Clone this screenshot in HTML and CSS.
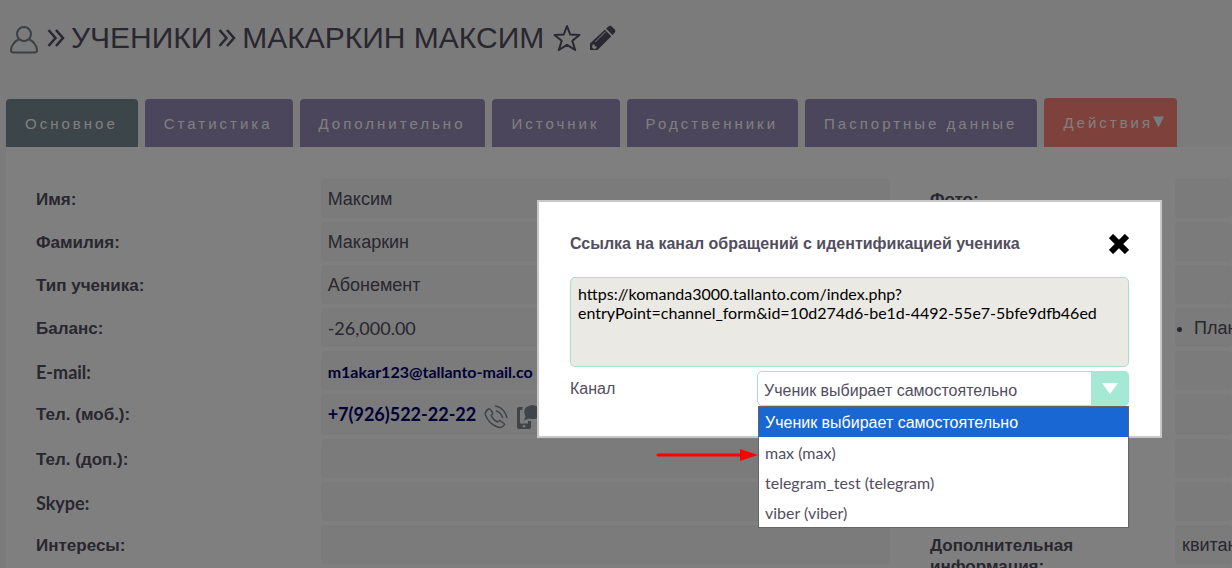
FILE: index.html
```html
<!DOCTYPE html>
<html lang="ru">
<head>
  <meta charset="UTF-8">
  <meta name="viewport" content="width=device-width, initial-scale=1.0">
  <title>Макаркин Максим</title>
  <link rel="stylesheet" href="styles.css">
</head>
<body>

  <div class="page">
    <header class="module-title">
      <svg class="icon-user" viewBox="0 0 28 28" fill="none" stroke="currentColor" stroke-width="2">
        <circle cx="14" cy="8" r="7"/>
        <path d="M8.500 13.500C4.500 15.500 1 20 1 24Q1 26.500 3.500 26.500H24.500Q27 26.500 27 24C27 20 23.500 15.500 19.500 13.500"/>
      </svg>
      <h1>
        <svg class="chevrons" viewBox="0 0 18 18" fill="none" stroke="currentColor" stroke-width="2.500"><path d="M1.500 1L8.500 9L1.500 17M9 1L16 9L9 17"/></svg>
        <span>УЧЕНИКИ</span>
        <svg class="chevrons" viewBox="0 0 18 18" fill="none" stroke="currentColor" stroke-width="2.500"><path d="M1.500 1L8.500 9L1.500 17M9 1L16 9L9 17"/></svg>
        <span>МАКАРКИН МАКСИМ</span>
      </h1>
      <button class="icon-btn" aria-label="В избранное">
        <svg class="icon-star" viewBox="0 0 28 28" fill="none" stroke="currentColor" stroke-width="2" stroke-linejoin="round">
          <path d="M14 2L17.200 10.500L26.500 11L19.300 16.700L22.200 26L14 20.800L5.800 26L8.700 16.700L1.500 11L10.800 10.500Z"/>
        </svg>
      </button>
      <button class="icon-btn" aria-label="Редактировать">
        <svg class="icon-pencil" viewBox="0 0 26 26" fill="currentColor">
          <path d="M18.200 1.700Q20 0 21.800 1.500L24.500 4.200Q26.300 6 24.600 7.800L22.500 9.900L16 3.600Z"/>
          <path fill-rule="evenodd" d="M14.800 4.800L21.300 11.200L7.500 25H0V18.500ZM2.800 19.500L2 22.200L3.700 24L6.500 23.200L6.500 21.300H4.700V19.500ZM5.500 17.200L15.800 7.100L15.200 6.500L5 16.700Z"/>
        </svg>
      </button>
    </header>

    <nav class="tabs">
      <a href="#main" class="tab active">Основное</a>
      <a href="#stat" class="tab">Статистика</a>
      <a href="#extra" class="tab">Дополнительно</a>
      <a href="#source" class="tab">Источник</a>
      <a href="#relatives" class="tab">Родственники</a>
      <a href="#passport" class="tab">Паспортные данные</a>
      <button class="tab actions">Действия<svg viewBox="0 0 12 12" fill="currentColor"><path d="M0 0H12L6 12Z"/></svg></button>
    </nav>

    <main class="panel">
      <dl class="fields fields-left">
        <dt>Имя:</dt><dd>Максим</dd>
        <dt>Фамилия:</dt><dd>Макаркин</dd>
        <dt>Тип ученика:</dt><dd>Абонемент</dd>
        <dt>Баланс:</dt><dd class="latin">-26,000.00</dd>
        <dt class="latin">E-mail:</dt><dd class="latin"><a class="email" href="mailto:m1akar123@tallanto-mail.co">m1akar123@tallanto-mail.co</a></dd>
        <dt>Тел. (моб.):</dt>
        <dd class="phone latin">
          <a href="tel:+79265222222">+7(926)522-22-22</a>
          <svg viewBox="0 0 24 24" fill="none" stroke="currentColor" stroke-width="1.500" stroke-linecap="round">
            <path d="M4.500 4Q5.500 3.300 6.300 4.400L8.500 7.500Q9 8.500 8 9.500L7.200 10.300Q8.500 14.500 13.500 17L14.700 16Q15.700 15.200 16.700 16L20 18.500Q21 19.300 20 20.300Q17.500 23.500 13.500 22Q4.500 18.500 1.500 10Q.5 6.500 4.500 4Z"/>
            <path d="M12.500 6Q17 7.500 18.500 12.500M11.500 1Q20.500 3 23 13" stroke-dasharray="5 1"/>
          </svg>
          <svg viewBox="0 0 24 24" fill="currentColor">
            <path d="M7 2H3Q1 2 1 4V22Q1 24 3 24H13Q15 24 15 22V16H12V18.500H4V5H6Z"/>
            <circle class="phone-dot" cx="8" cy="21.200" r="1.300"/>
            <path d="M16 0Q25 1 25 7Q25 14 16 14Q14 14 13 13.500L8 15.500L9.500 11.500Q5 2 16 0Z"/>
          </svg>
        </dd>
        <dt>Тел. (доп.):</dt><dd></dd>
        <dt class="latin">Skype:</dt><dd></dd>
        <dt>Интересы:</dt><dd></dd>
      </dl>

      <dl class="fields fields-right">
        <dt>Фото:</dt><dd></dd>
        <dt></dt><dd></dd>
        <dt></dt><dd></dd>
        <dt></dt><dd class="plans"><ul><li>План</li></ul></dd>
        <dt></dt><dd></dd>
        <dt></dt><dd class="phone"></dd>
        <dt></dt><dd></dd>
        <dt></dt><dd></dd>
        <dt>Дополнительная информация:</dt><dd>квитан</dd>
      </dl>
    </main>
  </div>

  <!-- Окно со ссылкой на канал -->
  <div class="overlay">
    <div class="modal" role="dialog" aria-labelledby="modal-title">
      <div class="modal-head">
        <h2 id="modal-title">Ссылка на канал обращений с идентификацией ученика</h2>
        <button class="close-btn" aria-label="Закрыть">
          <svg viewBox="0 0 20 20" stroke="currentColor" stroke-width="6"><path d="M2 2L18 18M18 2L2 18"/></svg>
        </button>
      </div>
      <textarea class="link-box latin" aria-labelledby="modal-title" readonly>https://komanda3000.tallanto.com/index.php?entryPoint=channel_form&amp;id=10d274d6-be1d-4492-55e7-5bfe9dfb46ed</textarea>
      <div class="channel">
        <label for="channel">Канал</label>
        <div class="select-box">
          <select id="channel">
            <option>Ученик выбирает самостоятельно</option>
            <option>max (max)</option>
            <option>telegram_test (telegram)</option>
            <option>viber (viber)</option>
          </select>
          <span class="select-arrow"><svg viewBox="0 0 16 11" fill="currentColor"><path d="M0 0H16L8 11Z"/></svg></span>
          <ul class="options" role="listbox">
            <li class="selected" role="option">Ученик выбирает самостоятельно</li>
            <li class="latin" role="option">max (max)</li>
            <li class="latin" role="option">telegram_test (telegram)</li>
            <li class="latin" role="option">viber (viber)</li>
          </ul>
          <svg class="pointer" viewBox="0 0 102 12">
            <path d="M2 6H86" stroke="currentColor" stroke-width="3" stroke-linecap="round"/>
            <path d="M84 0L102 6L84 12Z" fill="currentColor"/>
          </svg>
        </div>
      </div>
    </div>
  </div>

</body>
</html>
```
FILE: styles.css
```css
* {
  box-sizing: border-box;
}

body {
  margin: 0;
  height: 100vh;
  overflow: hidden;
  background: #f6f6f6;
  color: #524e60;
  font-family: "Liberation Sans", Arial, sans-serif;
  font-size: 18px;
}

button {
  border: none;
  background: none;
  padding: 0;
  font: inherit;
  color: inherit;
  cursor: pointer;
}

svg {
  display: block;
}

.page {
  padding-left: 6px;
}

/* Заголовок */
.module-title {
  display: flex;
  align-items: center;
  height: 75px;
  padding-left: 4px;
  gap: 9px;
}

.module-title h1 {
  display: flex;
  align-items: center;
  gap: 6px;
  margin: 0;
  font-size: 30px;
  font-weight: 400;
  white-space: nowrap;
}

.chevrons {
  width: 18px;
  height: 18px;
}

.icon-user {
  width: 28px;
  height: 28px;
  margin-top: 4px;
  color: #788087;
}

.icon-star {
  width: 28px;
  height: 28px;
}

.icon-pencil {
  width: 26px;
  height: 26px;
}

/* Вкладки */
.tabs {
  display: flex;
  align-items: flex-end;
  gap: 7px;
  padding-top: 23px;
}

.tab {
  height: 48px;
  padding: 0 20px 0 19px;
  border-radius: 4px 4px 0 0;
  background: #968cb8;
  color: #fff;
  font-size: 15px;
  line-height: 49px;
  letter-spacing: 3px;
  text-decoration: none;
  white-space: nowrap;
}

.tab.active {
  background: #788a92;
}

.tab.actions {
  display: flex;
  height: 49px;
  padding-right: 13px;
  background: #ff8278;
}

.tab.actions svg {
  width: 11px;
  height: 12px;
  margin-top: 18px;
  color: #e4ffff;
}

/* Карточка ученика */
.panel {
  display: flex;
  gap: 40px;
  padding: 32px 0 0 30px;
  background: #fff;
}

.fields {
  display: grid;
  align-content: start;
  row-gap: 4px;
  margin: 0;
  line-height: 21px;
}

.fields-left {
  flex: 854;
  grid-template-columns: 1fr 2fr;
}

.fields-right {
  flex: 302;
  grid-template-columns: 245px 1fr;
}

.fields dt {
  padding-top: 10px;
  font-size: 17px;
  font-weight: 700;
}

.fields dt.latin {
  padding-top: 11px;
  font-size: 18px;
}

.fields dd {
  height: 39px;
  margin: 0;
  padding: 10px 7px 8px;
  border-radius: 4px;
  background: #f6f6f6;
  white-space: nowrap;
  overflow: hidden;
}

.latin,
.fields .latin {
  font-family: Lato, sans-serif;
}

.fields a {
  color: #00006c;
  font-weight: 700;
  text-decoration: none;
}

.fields .email {
  font-size: 16px;
}

.fields .phone {
  display: flex;
  gap: 8px;
  height: 41px;
}

.phone svg {
  flex-shrink: 0;
  width: 24px;
  height: 24px;
  margin-top: 1px;
  color: #808890;
}

.phone-dot {
  fill: #f6f6f6;
}

.fields .plans {
  padding-left: 0;
}

.plans ul {
  margin: 0;
  padding-left: 19px;
}

/* Окно */
.overlay {
  position: fixed;
  inset: 0;
  display: flex;
  align-items: flex-start;
  justify-content: flex-end;
  padding: 200px 70px 0 0;
  background: rgba(0, 0, 0, 0.5);
}

.modal {
  width: 625px;
  padding: 32px 31px 30px;
  border: 2px solid #c8c8c8;
  background: #fff;
  font-size: 16px;
}

.modal-head {
  display: flex;
  justify-content: space-between;
  align-items: center;
  margin-bottom: 23px;
}

.modal-head h2 {
  margin: 0;
  font-size: 16px;
}

.close-btn svg {
  width: 20px;
  height: 20px;
  color: #000;
}

.link-box {
  display: block;
  width: 100%;
  height: 90px;
  padding: 6px 7px;
  border: 1px solid #a5e0d0;
  border-radius: 5px;
  background: #eae9e4;
  color: #000;
  font-size: 16px;
  line-height: 19px;
  resize: none;
}

.channel {
  display: flex;
  align-items: center;
  justify-content: space-between;
  margin-top: 4px;
}

.select-box {
  position: relative;
  width: 372px;
}

.select-box select {
  display: block;
  width: 100%;
  height: 35px;
  padding: 3px 6px 0;
  border: 1px solid #a5e0d0;
  border-radius: 5px;
  background: #fff;
  color: inherit;
  font: inherit;
  appearance: none;
}

.select-arrow {
  position: absolute;
  top: 0;
  right: 0;
  display: flex;
  align-items: center;
  justify-content: center;
  width: 38px;
  height: 35px;
  border-radius: 0 5px 5px 0;
  background: #a5e8d4;
  color: #fff;
  pointer-events: none;
}

.select-arrow svg {
  width: 16px;
  height: 11px;
}

.options {
  position: absolute;
  top: 35px;
  left: 1px;
  right: 0;
  margin: 0;
  padding: 0;
  border: 1px solid #666;
  background: #fff;
  list-style: none;
  line-height: 30px;
}

.options li {
  padding: 1px 6px 0;
  height: 30px;
}

.options .selected {
  background: #1967d2;
  color: #fff;
}

/* Красная стрелка */
.pointer {
  position: absolute;
  top: 78px;
  right: 371px;
  width: 102px;
  height: 12px;
  color: #f00;
}
```
